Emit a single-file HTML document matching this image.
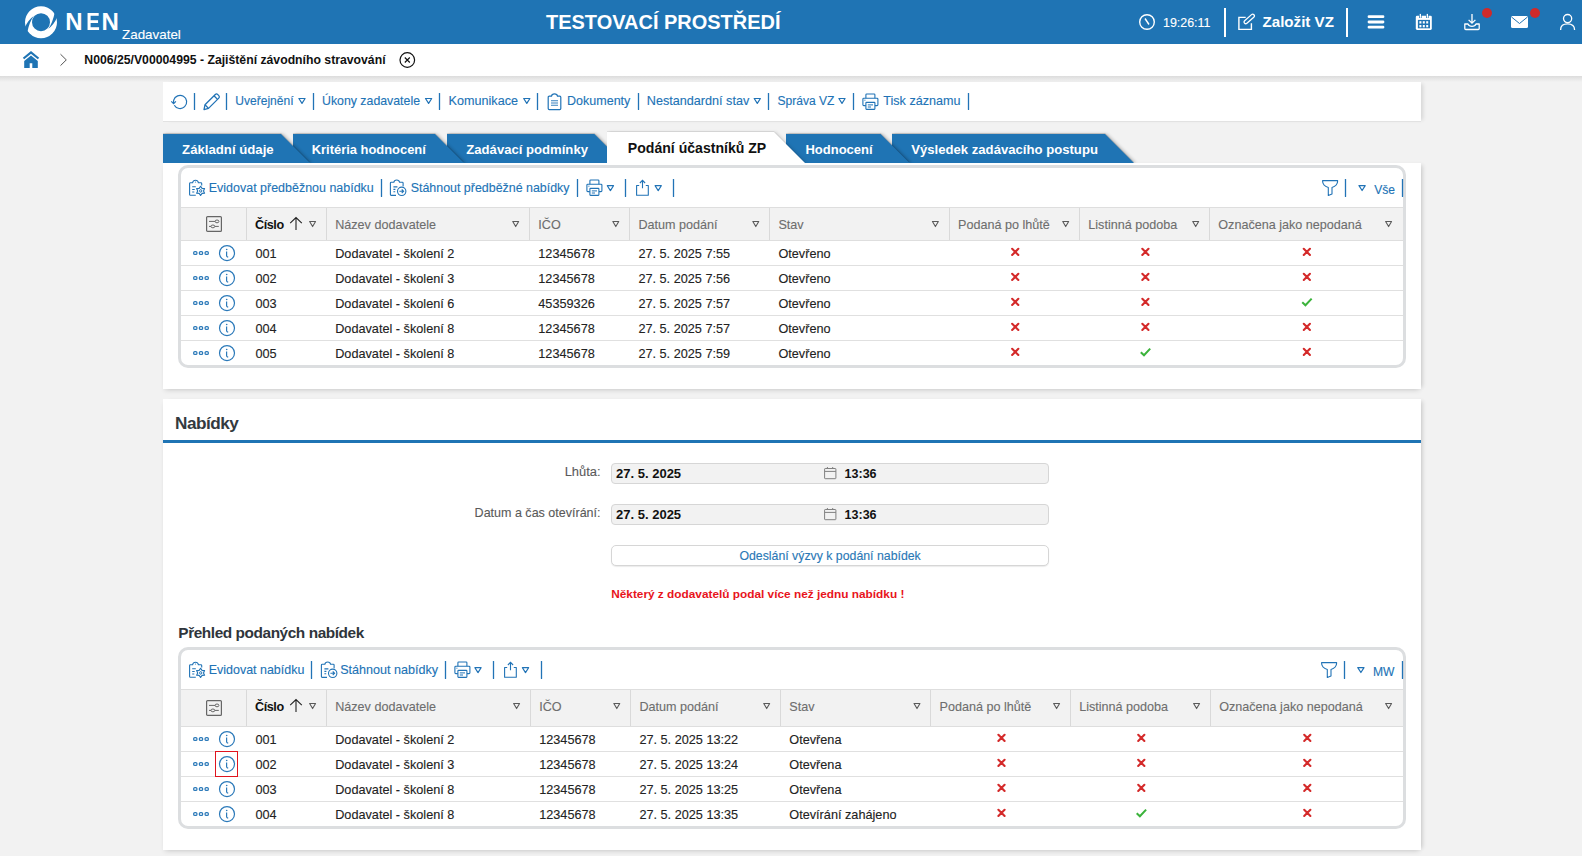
<!DOCTYPE html>
<html lang="cs"><head><meta charset="utf-8"><title>NEN</title>
<style>
html,body{margin:0;padding:0;}
body{width:1582px;height:856px;overflow:hidden;position:relative;background:#f2f2f2;font-family:"Liberation Sans",sans-serif;}
.t{position:absolute;white-space:nowrap;line-height:1;-webkit-text-stroke:0.12px currentColor;}
.b{position:absolute;display:block;}
</style></head><body>
<div class="b" style="left:0px;top:0px;width:1582px;height:44px;background:#1f74b4"></div>
<div class="b" style="left:0px;top:44px;width:1582px;height:32px;background:#fff"></div>
<div class="b" style="left:0px;top:76px;width:1582px;height:6px;background:linear-gradient(#dcdcdc,#f2f2f2)"></div>
<svg class="b" style="left:24px;top:5px;" width="34" height="34" viewBox="0 0 34 34"><circle cx="17" cy="17.2" r="12.5" fill="none" stroke="#fff" stroke-width="7"/>
<path d="M9.80 11.00 Q4.40 14.60 0.60 22.80 L3.20 27.60 Q5.40 16.60 9.80 11.00 Z" fill="#1f74b4"/><path d="M24.20 23.80 Q29.60 20.20 33.40 12.00 L30.80 7.20 Q28.60 18.20 24.20 23.80 Z" fill="#1f74b4"/></svg>
<div class="t" style="left:65.20px;top:9.60px;font-size:24.00px;font-weight:bold;-webkit-text-stroke:0;color:#fff;">N</div>
<div class="t" style="left:86.20px;top:9.60px;font-size:24.00px;font-weight:bold;-webkit-text-stroke:0;color:#fff;transform:scaleX(0.85);transform-origin:2px 0">E</div>
<div class="t" style="left:101.60px;top:9.60px;font-size:24.00px;font-weight:bold;-webkit-text-stroke:0;color:#fff;">N</div>
<div class="t" style="left:122.00px;top:28.41px;font-size:13.40px;color:#fff;">Zadavatel</div>
<div class="t" style="left:546.00px;top:11.72px;font-size:19.98px;font-weight:bold;-webkit-text-stroke:0;color:#fff;">TESTOVACÍ PROSTŘEDÍ</div>
<svg class="b" style="left:1138px;top:13px;" width="18" height="18" viewBox="0 0 18 18"><circle cx="9" cy="9" r="7.3" fill="none" stroke="#fff" stroke-width="1.4"/><path d="M7 5.5 L11 11.5" stroke="#fff" stroke-width="1.4" fill="none"/></svg>
<div class="t" style="left:1163.00px;top:17.23px;font-size:12.44px;color:#fff;">19:26:11</div>
<div class="b" style="left:1224px;top:8px;width:2px;height:29px;background:#fff"></div>
<svg class="b" style="left:1237px;top:13px;" width="20" height="18" viewBox="0 0 20 18"><path d="M8.7 4.4 H1.9 V16.4 H14.4 V10.2" fill="none" stroke="#fff" stroke-width="1.4"/><rect x="5.9" y="4.25" width="12.6" height="3.4" rx="1.7" transform="rotate(-41.7 12.2 5.95)" fill="none" stroke="#fff" stroke-width="1.3"/></svg>
<div class="t" style="left:1262.50px;top:14.13px;font-size:15.14px;font-weight:bold;-webkit-text-stroke:0;color:#fff;">Založit VZ</div>
<div class="b" style="left:1346px;top:8px;width:2px;height:29px;background:#fff"></div>
<svg class="b" style="left:1367px;top:14px;" width="18" height="16" viewBox="0 0 18 16"><path d="M2 2.7 H16 M2 8 H16 M2 13.2 H16" stroke="#fff" stroke-width="2.8" stroke-linecap="round"/></svg>
<svg class="b" style="left:1414px;top:13px;" width="20" height="18" viewBox="0 0 20 18"><rect x="1.8" y="2.8" width="16" height="14.1" rx="1.3" fill="#fff"/><rect x="3.9" y="6.9" width="12.1" height="8.4" fill="#1f74b4"/><rect x="5.40" y="8.20" width="2.0" height="2.3" fill="#fff"/><rect x="8.80" y="8.20" width="2.0" height="2.3" fill="#fff"/><rect x="12.20" y="8.20" width="2.0" height="2.3" fill="#fff"/><rect x="5.40" y="12.00" width="2.0" height="2.3" fill="#fff"/><rect x="8.80" y="12.00" width="2.0" height="2.3" fill="#fff"/><rect x="12.20" y="12.00" width="2.0" height="2.3" fill="#fff"/><rect x="5.0" y="0.4" width="2.6" height="4.6" fill="#1f74b4"/><rect x="12" y="0.4" width="2.6" height="4.6" fill="#1f74b4"/><rect x="5.7" y="0.9" width="1.3" height="3.9" fill="#fff"/><rect x="12.7" y="0.9" width="1.3" height="3.9" fill="#fff"/></svg>
<svg class="b" style="left:1463px;top:13px;" width="18" height="18" viewBox="0 0 18 18"><path d="M9 1 V10 M5.6 6.9 L9 10.2 L12.4 6.9" fill="none" stroke="#fff" stroke-width="1.3"/><path d="M1.8 11 V15.5 Q1.8 16.5 2.8 16.5 H15.2 Q16.2 16.5 16.2 15.5 V11 H13 Q12 13.3 9 13.3 Q6 13.3 5 11 Z" fill="none" stroke="#fff" stroke-width="1.3" stroke-linejoin="round"/></svg>
<svg class="b" style="left:1482px;top:8px;" width="10" height="10" viewBox="0 0 10 10"><circle cx="5" cy="5" r="5" fill="#cf2a2a"/></svg>
<svg class="b" style="left:1510px;top:15px;" width="19" height="14" viewBox="0 0 19 14"><rect x="1" y="1" width="17" height="12" rx="1.5" fill="#fff"/><path d="M1.5 2 L9.5 8.5 L17.5 2" fill="none" stroke="#1f74b4" stroke-width="1"/></svg>
<svg class="b" style="left:1530px;top:8px;" width="10" height="10" viewBox="0 0 10 10"><circle cx="5" cy="5" r="5" fill="#cf2a2a"/></svg>
<svg class="b" style="left:1559px;top:13px;" width="17" height="18" viewBox="0 0 17 18"><circle cx="8.6" cy="5.6" r="4.1" fill="none" stroke="#fff" stroke-width="1.3"/><path d="M1.6 17 Q1.6 10.8 8.6 10.8 Q15.6 10.8 15.6 17" fill="none" stroke="#fff" stroke-width="1.3"/></svg>
<svg class="b" style="left:22px;top:51px;" width="18" height="18" viewBox="0 0 18 18"><path d="M1.5 7.5 L9 1.5 L16.5 7.5" fill="none" stroke="#1f74b4" stroke-width="2.2"/><path d="M2.2 10 L9 4.6 L15.8 10 V17 H10.3 V12.3 H7.7 V17 H2.2 Z" fill="#1f74b4"/></svg>
<svg class="b" style="left:59px;top:53px;" width="10" height="14" viewBox="0 0 10 14"><path d="M1.5 1.2 L7.3 6.9 L1.5 12.6" fill="none" stroke="#555" stroke-width="1"/></svg>
<div class="t" style="left:84.30px;top:53.60px;font-size:12.24px;font-weight:bold;-webkit-text-stroke:0;color:#111;">N006/25/V00004995 - Zajištění závodního stravování</div>
<svg class="b" style="left:398px;top:51px;" width="18" height="18" viewBox="0 0 18 18"><circle cx="9.3" cy="9" r="7.3" fill="none" stroke="#111" stroke-width="1.2"/><path d="M6.8 6.5 L11.8 11.5 M11.8 6.5 L6.8 11.5" stroke="#111" stroke-width="1.15"/></svg>
<div class="b" style="left:163px;top:82px;width:1258px;height:40px;background:#fff;border-bottom:1px solid #e2e2e2;box-sizing:border-box;box-shadow:4px 0 4px -2px rgba(0,0,0,0.12)"></div>
<svg class="b" style="left:170px;top:93px;" width="19" height="18" viewBox="0 0 19 18"><path d="M4.3 12.2 A6.6 6.6 0 1 0 3.7 7.2 Q3.5 8.5 3.6 10.3" fill="none" stroke="#2173b6" stroke-width="1.2"/><path d="M1.3 8.3 L3.6 10.6 L5.9 8.3" fill="none" stroke="#2173b6" stroke-width="1.2"/></svg>
<svg class="b" style="left:192px;top:93px;" width="5" height="17" viewBox="0 0 5 17"><line x1="2.50" y1="0.6" x2="2.50" y2="16.40" stroke="#2173b6" stroke-width="1.3" stroke-linecap="round"/></svg>
<svg class="b" style="left:202px;top:92px;" width="19" height="20" viewBox="0 0 19 20"><path d="M2 17.6 L3 12.8 L13.3 2.5 Q14.5 1.3 15.8 2.6 L16.8 3.6 Q18 4.9 16.8 6.1 L6.5 16.4 Z" fill="none" stroke="#2173b6" stroke-width="1.3" stroke-linejoin="round"/><path d="M3 12.8 L6.5 16.4 M12 3.8 L15.5 7.4" stroke="#2173b6" stroke-width="1.3"/></svg>
<svg class="b" style="left:224px;top:93px;" width="5" height="17" viewBox="0 0 5 17"><line x1="2.50" y1="0.6" x2="2.50" y2="16.40" stroke="#2173b6" stroke-width="1.3" stroke-linecap="round"/></svg>
<div class="t" style="left:235.30px;top:94.65px;font-size:12.06px;color:#2173b6;">Uveřejnění</div>
<svg class="b" style="left:297px;top:97px;" width="10" height="9" viewBox="0 0 10 9"><path d="M1.90 1.50 H8.10 L5.00 6.40 Z" fill="none" stroke="#2173b6" stroke-width="1.2" stroke-linejoin="round"/></svg>
<svg class="b" style="left:311px;top:93px;" width="5" height="17" viewBox="0 0 5 17"><line x1="2.50" y1="0.6" x2="2.50" y2="16.40" stroke="#2173b6" stroke-width="1.3" stroke-linecap="round"/></svg>
<div class="t" style="left:322.00px;top:95.32px;font-size:12.33px;color:#2173b6;">Úkony zadavatele</div>
<svg class="b" style="left:424px;top:97px;" width="10" height="9" viewBox="0 0 10 9"><path d="M1.50 1.50 H7.70 L4.60 6.40 Z" fill="none" stroke="#2173b6" stroke-width="1.2" stroke-linejoin="round"/></svg>
<svg class="b" style="left:437px;top:93px;" width="5" height="17" viewBox="0 0 5 17"><line x1="2.50" y1="0.6" x2="2.50" y2="16.40" stroke="#2173b6" stroke-width="1.3" stroke-linecap="round"/></svg>
<div class="t" style="left:448.60px;top:95.08px;font-size:12.61px;color:#2173b6;">Komunikace</div>
<svg class="b" style="left:522px;top:97px;" width="10" height="9" viewBox="0 0 10 9"><path d="M1.70 1.50 H7.90 L4.80 6.40 Z" fill="none" stroke="#2173b6" stroke-width="1.2" stroke-linejoin="round"/></svg>
<svg class="b" style="left:535px;top:93px;" width="5" height="17" viewBox="0 0 5 17"><line x1="2.50" y1="0.6" x2="2.50" y2="16.40" stroke="#2173b6" stroke-width="1.3" stroke-linecap="round"/></svg>
<svg class="b" style="left:547px;top:93px;" width="15" height="18" viewBox="0 0 15 18"><path d="M4.5 3.2 H2.3 Q1.2 3.2 1.2 4.3 V15.6 Q1.2 16.6 2.3 16.6 H12.7 Q13.8 16.6 13.8 15.6 V4.3 Q13.8 3.2 12.7 3.2 H10.5 Q10.2 0.9 7.5 0.9 Q4.8 0.9 4.5 3.2 Z" fill="none" stroke="#2173b6" stroke-width="1.2"/><path d="M4 7.7 H11 M4 10 H11 M4 12.3 H11" stroke="#2173b6" stroke-width="1.1" opacity="0.9"/></svg>
<div class="t" style="left:567.10px;top:95.16px;font-size:12.51px;color:#2173b6;">Dokumenty</div>
<svg class="b" style="left:636px;top:93px;" width="5" height="17" viewBox="0 0 5 17"><line x1="2.50" y1="0.6" x2="2.50" y2="16.40" stroke="#2173b6" stroke-width="1.3" stroke-linecap="round"/></svg>
<div class="t" style="left:646.80px;top:95.07px;font-size:12.63px;color:#2173b6;">Nestandardní stav</div>
<svg class="b" style="left:753px;top:97px;" width="10" height="9" viewBox="0 0 10 9"><path d="M1.20 1.50 H7.40 L4.30 6.40 Z" fill="none" stroke="#2173b6" stroke-width="1.2" stroke-linejoin="round"/></svg>
<svg class="b" style="left:766px;top:93px;" width="5" height="17" viewBox="0 0 5 17"><line x1="2.50" y1="0.6" x2="2.50" y2="16.40" stroke="#2173b6" stroke-width="1.3" stroke-linecap="round"/></svg>
<div class="t" style="left:777.50px;top:94.64px;font-size:12.07px;color:#2173b6;">Správa VZ</div>
<svg class="b" style="left:837px;top:97px;" width="10" height="9" viewBox="0 0 10 9"><path d="M1.90 1.50 H8.10 L5.00 6.40 Z" fill="none" stroke="#2173b6" stroke-width="1.2" stroke-linejoin="round"/></svg>
<svg class="b" style="left:851px;top:93px;" width="5" height="17" viewBox="0 0 5 17"><line x1="2.50" y1="0.6" x2="2.50" y2="16.40" stroke="#2173b6" stroke-width="1.3" stroke-linecap="round"/></svg>
<svg class="b" style="left:862px;top:93px;" width="18" height="18" viewBox="0 0 18 18"><path d="M3.9 5.2 V1.8 Q3.9 1 4.7 1 H12.1 Q12.9 1 12.9 1.8 V5.2" fill="none" stroke="#2173b6" stroke-width="1.1"/><path d="M3.9 12.6 H1.8 Q0.9 12.6 0.9 11.7 V6.1 Q0.9 5.2 1.8 5.2 H15 Q15.9 5.2 15.9 6.1 V11.7 Q15.9 12.6 15 12.6 H12.9" fill="none" stroke="#2173b6" stroke-width="1.1"/><rect x="3.9" y="9.4" width="9" height="7" rx="0.6" fill="#fff" stroke="#2173b6" stroke-width="1.1"/><path d="M5.8 11.9 H11 M5.8 14 H9 M2.4 7.2 H3.4" stroke="#2173b6" stroke-width="1"/></svg>
<div class="t" style="left:883.30px;top:95.10px;font-size:12.59px;color:#2173b6;">Tisk záznamu</div>
<svg class="b" style="left:966px;top:93px;" width="5" height="17" viewBox="0 0 5 17"><line x1="2.50" y1="0.6" x2="2.50" y2="16.40" stroke="#2173b6" stroke-width="1.3" stroke-linecap="round"/></svg>
<div class="b" style="left:163px;top:163px;width:1258px;height:226px;background:#fff;box-shadow:4px 0 4px -2px rgba(0,0,0,0.12), 0 3px 5px -2px rgba(0,0,0,0.16)"></div>
<div class="b" style="left:0;top:0;width:1582px;height:163px;overflow:hidden;z-index:2">
<svg class="b" style="left:163px;top:134px;z-index:40;filter:drop-shadow(0 -1px 0.5px rgba(0,0,0,0.14)) drop-shadow(2px 0 1.6px rgba(0,0,0,0.22));" width="148" height="29" viewBox="0 0 148 29"><polygon points="0,0 118.0,0 147.0,29 0,29" fill="#1f74b4"/></svg>
<div class="t" style="left:182.10px;top:142.79px;font-size:13.19px;font-weight:bold;-webkit-text-stroke:0;color:#fff;z-index:40">Základní údaje</div>
<svg class="b" style="left:293px;top:134px;z-index:39;filter:drop-shadow(0 -1px 0.5px rgba(0,0,0,0.14)) drop-shadow(2px 0 1.6px rgba(0,0,0,0.22));" width="172" height="29" viewBox="0 0 172 29"><polygon points="0,0 142.0,0 171.0,29 0,29" fill="#1f74b4"/></svg>
<div class="t" style="left:311.70px;top:143.81px;font-size:12.93px;font-weight:bold;-webkit-text-stroke:0;color:#fff;z-index:39">Kritéria hodnocení</div>
<svg class="b" style="left:447px;top:134px;z-index:38;filter:drop-shadow(0 -1px 0.5px rgba(0,0,0,0.14)) drop-shadow(2px 0 1.6px rgba(0,0,0,0.22));" width="177" height="29" viewBox="0 0 177 29"><polygon points="0,0 147.4,0 176.4,29 0,29" fill="#1f74b4"/></svg>
<div class="t" style="left:466.30px;top:142.85px;font-size:13.11px;font-weight:bold;-webkit-text-stroke:0;color:#fff;z-index:38">Zadávací podmínky</div>
<svg class="b" style="left:607px;top:132px;z-index:50;filter:drop-shadow(0 -1px 0.5px rgba(0,0,0,0.08)) drop-shadow(2px 0 1.6px rgba(0,0,0,0.12));" width="199" height="31" viewBox="0 0 199 31"><polygon points="0,0 167.0,0 198.0,31 0,31" fill="#fff"/></svg>
<div class="t" style="left:627.80px;top:140.63px;font-size:14.08px;font-weight:bold;-webkit-text-stroke:0;color:#111;z-index:60">Podání účastníků ZP</div>
<svg class="b" style="left:786px;top:134px;z-index:36;filter:drop-shadow(0 -1px 0.5px rgba(0,0,0,0.14)) drop-shadow(2px 0 1.6px rgba(0,0,0,0.22));" width="124" height="29" viewBox="0 0 124 29"><polygon points="0,0 94.6,0 123.6,29 0,29" fill="#1f74b4"/></svg>
<div class="t" style="left:805.40px;top:142.92px;font-size:13.03px;font-weight:bold;-webkit-text-stroke:0;color:#fff;z-index:36">Hodnocení</div>
<svg class="b" style="left:892px;top:134px;z-index:35;filter:drop-shadow(0 -1px 0.5px rgba(0,0,0,0.14)) drop-shadow(2px 0 1.6px rgba(0,0,0,0.22));" width="243" height="29" viewBox="0 0 243 29"><polygon points="0,0 213.0,0 242.0,29 0,29" fill="#1f74b4"/></svg>
<div class="t" style="left:911.20px;top:142.84px;font-size:13.13px;font-weight:bold;-webkit-text-stroke:0;color:#fff;z-index:35">Výsledek zadávacího postupu</div>
</div>
<div class="b" style="left:178px;top:165px;width:1222px;height:197px;border:3px solid #dcdee0;border-radius:10px;background:#fff"></div>
<svg class="b" style="left:188px;top:179px;" width="18" height="18" viewBox="0 0 18 18"><path d="M7.8 16.3 H2.4 Q1.6 16.3 1.6 15.5 V4.5 Q1.6 3.7 2.4 3.7 H4.6 Q5 1.2 7.5 1.2 Q10 1.2 10.4 3.7 H12.9 Q13.7 3.7 13.7 4.5 V6.6" fill="none" stroke="#2173b6" stroke-width="1.1"/><path d="M4.2 7.8 H7.8 M4.2 10.5 H6.7 M4.2 13 H6.3" stroke="#2173b6" stroke-width="1.1"/><circle cx="7.5" cy="3" r="0.6" fill="#2173b6"/><polygon points="12.60,7.30 14.05,9.39 16.58,9.60 15.50,11.90 16.58,14.20 14.05,14.41 12.60,16.50 11.15,14.41 8.62,14.20 9.70,11.90 8.62,9.60 11.15,9.39" fill="#fff" stroke="#2173b6" stroke-width="1.1" stroke-linejoin="round"/><ellipse cx="12.7" cy="11.9" rx="1.1" ry="1.3" fill="none" stroke="#2173b6" stroke-width="1"/></svg>
<div class="t" style="left:208.80px;top:181.60px;font-size:12.47px;color:#2173b6;">Evidovat předběžnou nabídku</div>
<svg class="b" style="left:379px;top:179px;" width="5" height="18" viewBox="0 0 5 18"><line x1="2.50" y1="0.6" x2="2.50" y2="17.40" stroke="#2173b6" stroke-width="1.3" stroke-linecap="round"/></svg>
<svg class="b" style="left:389px;top:179px;" width="18" height="18" viewBox="0 0 18 18"><path d="M7 16.4 H2.2 Q1.4 16.4 1.4 15.6 V4.1 Q1.4 3.3 2.2 3.3 H4.8 Q5.2 1 7.7 1 Q10.2 1 10.6 3.3 H13.3 Q14.1 3.3 14.1 4.1 V7.2" fill="none" stroke="#2173b6" stroke-width="1.1"/><path d="M4.4 7.9 H8.4 M4.4 10.4 H6.4 M4.4 12.8 H6.2" stroke="#2173b6" stroke-width="1.1"/><circle cx="12.7" cy="12.3" r="4.2" fill="#fff" stroke="#2173b6" stroke-width="1.1"/><path d="M10.4 12.3 H14.6 M12.7 10.5 L14.6 12.3 L12.7 14.1" fill="none" stroke="#2173b6" stroke-width="1.1"/></svg>
<div class="t" style="left:410.70px;top:181.63px;font-size:12.43px;color:#2173b6;">Stáhnout předběžné nabídky</div>
<svg class="b" style="left:575px;top:179px;" width="5" height="18" viewBox="0 0 5 18"><line x1="2.50" y1="0.6" x2="2.50" y2="17.40" stroke="#2173b6" stroke-width="1.3" stroke-linecap="round"/></svg>
<svg class="b" style="left:586px;top:179px;" width="18" height="18" viewBox="0 0 18 18"><path d="M3.9 5.2 V1.8 Q3.9 1 4.7 1 H12.1 Q12.9 1 12.9 1.8 V5.2" fill="none" stroke="#2173b6" stroke-width="1.1"/><path d="M3.9 12.6 H1.8 Q0.9 12.6 0.9 11.7 V6.1 Q0.9 5.2 1.8 5.2 H15 Q15.9 5.2 15.9 6.1 V11.7 Q15.9 12.6 15 12.6 H12.9" fill="none" stroke="#2173b6" stroke-width="1.1"/><rect x="3.9" y="9.4" width="9" height="7" rx="0.6" fill="#fff" stroke="#2173b6" stroke-width="1.1"/><path d="M5.8 11.9 H11 M5.8 14 H9 M2.4 7.2 H3.4" stroke="#2173b6" stroke-width="1"/></svg>
<svg class="b" style="left:606px;top:184px;" width="10" height="9" viewBox="0 0 10 9"><path d="M1.30 1.70 H7.50 L4.40 6.60 Z" fill="none" stroke="#2173b6" stroke-width="1.2" stroke-linejoin="round"/></svg>
<svg class="b" style="left:623px;top:179px;" width="5" height="18" viewBox="0 0 5 18"><line x1="2.50" y1="0.6" x2="2.50" y2="17.40" stroke="#2173b6" stroke-width="1.3" stroke-linecap="round"/></svg>
<svg class="b" style="left:635px;top:179px;" width="15" height="18" viewBox="0 0 15 18"><path d="M4.2 6.5 H1.6 V16.3 H13.3 V6.5 H10.8" fill="none" stroke="#2173b6" stroke-width="1.1" stroke-linejoin="round"/><path d="M7.5 9.2 V1.4 M4.9 4 L7.5 1.3 L10.1 4" fill="none" stroke="#2173b6" stroke-width="1.1"/></svg>
<svg class="b" style="left:654px;top:184px;" width="10" height="9" viewBox="0 0 10 9"><path d="M1.10 1.70 H7.30 L4.20 6.60 Z" fill="none" stroke="#2173b6" stroke-width="1.2" stroke-linejoin="round"/></svg>
<svg class="b" style="left:671px;top:179px;" width="5" height="18" viewBox="0 0 5 18"><line x1="2.50" y1="0.6" x2="2.50" y2="17.40" stroke="#2173b6" stroke-width="1.3" stroke-linecap="round"/></svg>
<svg class="b" style="left:1321px;top:179px;" width="18" height="18" viewBox="0 0 18 18"><path d="M1.6 1.6 H16.6 V2.3 Q16.6 6.6 11 8.6 V14.9 L7.3 16.5 V8.6 Q1.6 6.6 1.6 2.3 Z" fill="none" stroke="#2173b6" stroke-width="1.1" stroke-linejoin="round"/></svg>
<svg class="b" style="left:1343px;top:179px;" width="5" height="18" viewBox="0 0 5 18"><line x1="2.50" y1="0.6" x2="2.50" y2="17.40" stroke="#2173b6" stroke-width="1.3" stroke-linecap="round"/></svg>
<svg class="b" style="left:1357px;top:184px;" width="10" height="9" viewBox="0 0 10 9"><path d="M2.00 1.60 H8.20 L5.10 6.50 Z" fill="none" stroke="#2173b6" stroke-width="1.2" stroke-linejoin="round"/></svg>
<div class="t" style="left:1374.20px;top:183.52px;font-size:12.10px;color:#2173b6;">Vše</div>
<svg class="b" style="left:1400px;top:179px;" width="5" height="18" viewBox="0 0 5 18"><line x1="2.50" y1="0.6" x2="2.50" y2="17.40" stroke="#2173b6" stroke-width="1.3" stroke-linecap="round"/></svg>
<div class="b" style="left:181px;top:207px;width:1222px;height:34px;background:#f2f2f2;border-top:1px solid #dedede;border-bottom:1px solid #dedede;box-sizing:border-box"></div>
<div class="b" style="left:246px;top:208px;width:1px;height:32px;background:#d9d9d9"></div>
<div class="b" style="left:326px;top:208px;width:1px;height:32px;background:#d9d9d9"></div>
<div class="b" style="left:529px;top:208px;width:1px;height:32px;background:#d9d9d9"></div>
<div class="b" style="left:629px;top:208px;width:1px;height:32px;background:#d9d9d9"></div>
<div class="b" style="left:769px;top:208px;width:1px;height:32px;background:#d9d9d9"></div>
<div class="b" style="left:949px;top:208px;width:1px;height:32px;background:#d9d9d9"></div>
<div class="b" style="left:1079px;top:208px;width:1px;height:32px;background:#d9d9d9"></div>
<div class="b" style="left:1209px;top:208px;width:1px;height:32px;background:#d9d9d9"></div>
<svg class="b" style="left:205px;top:215px;" width="18" height="18" viewBox="0 0 18 18"><rect x="1.6" y="1.6" width="14.8" height="14.8" rx="1" fill="none" stroke="#666" stroke-width="1.2"/><path d="M4 6.4 H10.2 M4 11.4 H6 M9.8 11.4 H13.8" stroke="#666" stroke-width="1"/><ellipse cx="12" cy="6.4" rx="1.9" ry="1.4" fill="none" stroke="#666" stroke-width="1"/><ellipse cx="7.9" cy="11.4" rx="1.9" ry="1.4" fill="none" stroke="#666" stroke-width="1"/></svg>
<div class="t" style="left:255.10px;top:219.09px;font-size:12.60px;font-weight:bold;-webkit-text-stroke:0;color:#111;letter-spacing:-0.45px">Číslo</div>
<svg class="b" style="left:288px;top:216px;" width="16" height="15" viewBox="0 0 16 15"><path d="M2.2 7.2 L8 1.6 L13.8 7.2 M8 1.9 V14" fill="none" stroke="#222" stroke-width="1.1"/></svg>
<svg class="b" style="left:308px;top:220px;" width="10" height="9" viewBox="0 0 10 9"><path d="M1.65 1.55 H7.55 L4.60 6.55 Z" fill="none" stroke="#5a5a5a" stroke-width="1.1" stroke-linejoin="round"/></svg>
<div class="t" style="left:335.20px;top:219.29px;font-size:12.60px;color:#6e6e6e;">Název dodavatele</div>
<svg class="b" style="left:511px;top:220px;" width="10" height="9" viewBox="0 0 10 9"><path d="M1.75 1.55 H7.65 L4.70 6.55 Z" fill="none" stroke="#5a5a5a" stroke-width="1.1" stroke-linejoin="round"/></svg>
<div class="t" style="left:538.30px;top:219.29px;font-size:12.60px;color:#6e6e6e;">IČO</div>
<svg class="b" style="left:611px;top:220px;" width="10" height="9" viewBox="0 0 10 9"><path d="M1.85 1.55 H7.75 L4.80 6.55 Z" fill="none" stroke="#5a5a5a" stroke-width="1.1" stroke-linejoin="round"/></svg>
<div class="t" style="left:638.40px;top:219.29px;font-size:12.60px;color:#6e6e6e;">Datum podání</div>
<svg class="b" style="left:751px;top:220px;" width="10" height="9" viewBox="0 0 10 9"><path d="M1.85 1.55 H7.75 L4.80 6.55 Z" fill="none" stroke="#5a5a5a" stroke-width="1.1" stroke-linejoin="round"/></svg>
<div class="t" style="left:778.40px;top:219.29px;font-size:12.60px;color:#6e6e6e;">Stav</div>
<svg class="b" style="left:931px;top:220px;" width="10" height="9" viewBox="0 0 10 9"><path d="M1.45 1.55 H7.35 L4.40 6.55 Z" fill="none" stroke="#5a5a5a" stroke-width="1.1" stroke-linejoin="round"/></svg>
<div class="t" style="left:958.00px;top:219.29px;font-size:12.60px;color:#6e6e6e;">Podaná po lhůtě</div>
<svg class="b" style="left:1061px;top:220px;" width="10" height="9" viewBox="0 0 10 9"><path d="M1.75 1.55 H7.65 L4.70 6.55 Z" fill="none" stroke="#5a5a5a" stroke-width="1.1" stroke-linejoin="round"/></svg>
<div class="t" style="left:1088.30px;top:219.29px;font-size:12.60px;color:#6e6e6e;">Listinná podoba</div>
<svg class="b" style="left:1191px;top:220px;" width="10" height="9" viewBox="0 0 10 9"><path d="M1.75 1.55 H7.65 L4.70 6.55 Z" fill="none" stroke="#5a5a5a" stroke-width="1.1" stroke-linejoin="round"/></svg>
<div class="t" style="left:1218.30px;top:219.29px;font-size:12.60px;color:#6e6e6e;">Označena jako nepodaná</div>
<svg class="b" style="left:1384px;top:220px;" width="10" height="9" viewBox="0 0 10 9"><path d="M1.65 1.55 H7.55 L4.60 6.55 Z" fill="none" stroke="#5a5a5a" stroke-width="1.1" stroke-linejoin="round"/></svg>
<svg class="b" style="left:192px;top:249px;" width="18" height="8" viewBox="0 0 18 8"><rect x="1.65" y="2.55" width="3.3" height="2.9" rx="1.25" fill="none" stroke="#2b79b9" stroke-width="1.25"/><rect x="7.35" y="2.55" width="3.3" height="2.9" rx="1.25" fill="none" stroke="#2b79b9" stroke-width="1.25"/><rect x="13.05" y="2.55" width="3.3" height="2.9" rx="1.25" fill="none" stroke="#2b79b9" stroke-width="1.25"/></svg>
<svg class="b" style="left:218px;top:244px;" width="18" height="18" viewBox="0 0 18 18"><circle cx="9.00" cy="9.10" r="7.5" fill="none" stroke="#2b79b9" stroke-width="1.2"/><circle cx="8.70" cy="5.50" r="0.8" fill="#2b79b9"/><path d="M8.60 7.50 V11.70 Q8.60 12.70 10.20 13.30" fill="none" stroke="#2b79b9" stroke-width="1.2"/></svg>
<div class="t" style="left:255.40px;top:247.60px;font-size:12.70px;color:#222;">001</div>
<div class="t" style="left:335.20px;top:247.60px;font-size:12.70px;color:#222;">Dodavatel - školení 2</div>
<div class="t" style="left:538.30px;top:247.60px;font-size:12.70px;color:#222;">12345678</div>
<div class="t" style="left:638.40px;top:247.60px;font-size:12.70px;color:#222;">27. 5. 2025 7:55</div>
<div class="t" style="left:778.40px;top:247.60px;font-size:12.70px;color:#222;">Otevřeno</div>
<svg class="b" style="left:1010px;top:247px;" width="10" height="10" viewBox="0 0 10 10"><path d="M2.15 1.80 L8.35 8.00 M8.35 1.80 L2.15 8.00" stroke="#d42a2a" stroke-width="2.1" stroke-linecap="round"/></svg>
<svg class="b" style="left:1140px;top:247px;" width="10" height="10" viewBox="0 0 10 10"><path d="M2.30 1.80 L8.50 8.00 M8.50 1.80 L2.30 8.00" stroke="#d42a2a" stroke-width="2.1" stroke-linecap="round"/></svg>
<svg class="b" style="left:1302px;top:247px;" width="10" height="10" viewBox="0 0 10 10"><path d="M1.75 1.80 L7.95 8.00 M7.95 1.80 L1.75 8.00" stroke="#d42a2a" stroke-width="2.1" stroke-linecap="round"/></svg>
<div class="b" style="left:181px;top:265px;width:1222px;height:1px;background:#e0e0e0"></div>
<svg class="b" style="left:192px;top:274px;" width="18" height="8" viewBox="0 0 18 8"><rect x="1.65" y="2.55" width="3.3" height="2.9" rx="1.25" fill="none" stroke="#2b79b9" stroke-width="1.25"/><rect x="7.35" y="2.55" width="3.3" height="2.9" rx="1.25" fill="none" stroke="#2b79b9" stroke-width="1.25"/><rect x="13.05" y="2.55" width="3.3" height="2.9" rx="1.25" fill="none" stroke="#2b79b9" stroke-width="1.25"/></svg>
<svg class="b" style="left:218px;top:269px;" width="18" height="18" viewBox="0 0 18 18"><circle cx="9.00" cy="9.10" r="7.5" fill="none" stroke="#2b79b9" stroke-width="1.2"/><circle cx="8.70" cy="5.50" r="0.8" fill="#2b79b9"/><path d="M8.60 7.50 V11.70 Q8.60 12.70 10.20 13.30" fill="none" stroke="#2b79b9" stroke-width="1.2"/></svg>
<div class="t" style="left:255.40px;top:272.60px;font-size:12.70px;color:#222;">002</div>
<div class="t" style="left:335.20px;top:272.60px;font-size:12.70px;color:#222;">Dodavatel - školení 3</div>
<div class="t" style="left:538.30px;top:272.60px;font-size:12.70px;color:#222;">12345678</div>
<div class="t" style="left:638.40px;top:272.60px;font-size:12.70px;color:#222;">27. 5. 2025 7:56</div>
<div class="t" style="left:778.40px;top:272.60px;font-size:12.70px;color:#222;">Otevřeno</div>
<svg class="b" style="left:1010px;top:272px;" width="10" height="10" viewBox="0 0 10 10"><path d="M2.15 1.80 L8.35 8.00 M8.35 1.80 L2.15 8.00" stroke="#d42a2a" stroke-width="2.1" stroke-linecap="round"/></svg>
<svg class="b" style="left:1140px;top:272px;" width="10" height="10" viewBox="0 0 10 10"><path d="M2.30 1.80 L8.50 8.00 M8.50 1.80 L2.30 8.00" stroke="#d42a2a" stroke-width="2.1" stroke-linecap="round"/></svg>
<svg class="b" style="left:1302px;top:272px;" width="10" height="10" viewBox="0 0 10 10"><path d="M1.75 1.80 L7.95 8.00 M7.95 1.80 L1.75 8.00" stroke="#d42a2a" stroke-width="2.1" stroke-linecap="round"/></svg>
<div class="b" style="left:181px;top:290px;width:1222px;height:1px;background:#e0e0e0"></div>
<svg class="b" style="left:192px;top:299px;" width="18" height="8" viewBox="0 0 18 8"><rect x="1.65" y="2.55" width="3.3" height="2.9" rx="1.25" fill="none" stroke="#2b79b9" stroke-width="1.25"/><rect x="7.35" y="2.55" width="3.3" height="2.9" rx="1.25" fill="none" stroke="#2b79b9" stroke-width="1.25"/><rect x="13.05" y="2.55" width="3.3" height="2.9" rx="1.25" fill="none" stroke="#2b79b9" stroke-width="1.25"/></svg>
<svg class="b" style="left:218px;top:294px;" width="18" height="18" viewBox="0 0 18 18"><circle cx="9.00" cy="9.10" r="7.5" fill="none" stroke="#2b79b9" stroke-width="1.2"/><circle cx="8.70" cy="5.50" r="0.8" fill="#2b79b9"/><path d="M8.60 7.50 V11.70 Q8.60 12.70 10.20 13.30" fill="none" stroke="#2b79b9" stroke-width="1.2"/></svg>
<div class="t" style="left:255.40px;top:297.60px;font-size:12.70px;color:#222;">003</div>
<div class="t" style="left:335.20px;top:297.60px;font-size:12.70px;color:#222;">Dodavatel - školení 6</div>
<div class="t" style="left:538.30px;top:297.60px;font-size:12.70px;color:#222;">45359326</div>
<div class="t" style="left:638.40px;top:297.60px;font-size:12.70px;color:#222;">27. 5. 2025 7:57</div>
<div class="t" style="left:778.40px;top:297.60px;font-size:12.70px;color:#222;">Otevřeno</div>
<svg class="b" style="left:1010px;top:297px;" width="10" height="10" viewBox="0 0 10 10"><path d="M2.15 1.80 L8.35 8.00 M8.35 1.80 L2.15 8.00" stroke="#d42a2a" stroke-width="2.1" stroke-linecap="round"/></svg>
<svg class="b" style="left:1140px;top:297px;" width="10" height="10" viewBox="0 0 10 10"><path d="M2.30 1.80 L8.50 8.00 M8.50 1.80 L2.30 8.00" stroke="#d42a2a" stroke-width="2.1" stroke-linecap="round"/></svg>
<svg class="b" style="left:1301px;top:297px;" width="12" height="10" viewBox="0 0 12 10"><path d="M1.25 5.20 L4.45 8.30 L10.65 1.60" fill="none" stroke="#3bb33b" stroke-width="2"/></svg>
<div class="b" style="left:181px;top:315px;width:1222px;height:1px;background:#e0e0e0"></div>
<svg class="b" style="left:192px;top:324px;" width="18" height="8" viewBox="0 0 18 8"><rect x="1.65" y="2.55" width="3.3" height="2.9" rx="1.25" fill="none" stroke="#2b79b9" stroke-width="1.25"/><rect x="7.35" y="2.55" width="3.3" height="2.9" rx="1.25" fill="none" stroke="#2b79b9" stroke-width="1.25"/><rect x="13.05" y="2.55" width="3.3" height="2.9" rx="1.25" fill="none" stroke="#2b79b9" stroke-width="1.25"/></svg>
<svg class="b" style="left:218px;top:319px;" width="18" height="18" viewBox="0 0 18 18"><circle cx="9.00" cy="9.10" r="7.5" fill="none" stroke="#2b79b9" stroke-width="1.2"/><circle cx="8.70" cy="5.50" r="0.8" fill="#2b79b9"/><path d="M8.60 7.50 V11.70 Q8.60 12.70 10.20 13.30" fill="none" stroke="#2b79b9" stroke-width="1.2"/></svg>
<div class="t" style="left:255.40px;top:322.60px;font-size:12.70px;color:#222;">004</div>
<div class="t" style="left:335.20px;top:322.60px;font-size:12.70px;color:#222;">Dodavatel - školení 8</div>
<div class="t" style="left:538.30px;top:322.60px;font-size:12.70px;color:#222;">12345678</div>
<div class="t" style="left:638.40px;top:322.60px;font-size:12.70px;color:#222;">27. 5. 2025 7:57</div>
<div class="t" style="left:778.40px;top:322.60px;font-size:12.70px;color:#222;">Otevřeno</div>
<svg class="b" style="left:1010px;top:322px;" width="10" height="10" viewBox="0 0 10 10"><path d="M2.15 1.80 L8.35 8.00 M8.35 1.80 L2.15 8.00" stroke="#d42a2a" stroke-width="2.1" stroke-linecap="round"/></svg>
<svg class="b" style="left:1140px;top:322px;" width="10" height="10" viewBox="0 0 10 10"><path d="M2.30 1.80 L8.50 8.00 M8.50 1.80 L2.30 8.00" stroke="#d42a2a" stroke-width="2.1" stroke-linecap="round"/></svg>
<svg class="b" style="left:1302px;top:322px;" width="10" height="10" viewBox="0 0 10 10"><path d="M1.75 1.80 L7.95 8.00 M7.95 1.80 L1.75 8.00" stroke="#d42a2a" stroke-width="2.1" stroke-linecap="round"/></svg>
<div class="b" style="left:181px;top:340px;width:1222px;height:1px;background:#e0e0e0"></div>
<svg class="b" style="left:192px;top:349px;" width="18" height="8" viewBox="0 0 18 8"><rect x="1.65" y="2.55" width="3.3" height="2.9" rx="1.25" fill="none" stroke="#2b79b9" stroke-width="1.25"/><rect x="7.35" y="2.55" width="3.3" height="2.9" rx="1.25" fill="none" stroke="#2b79b9" stroke-width="1.25"/><rect x="13.05" y="2.55" width="3.3" height="2.9" rx="1.25" fill="none" stroke="#2b79b9" stroke-width="1.25"/></svg>
<svg class="b" style="left:218px;top:344px;" width="18" height="18" viewBox="0 0 18 18"><circle cx="9.00" cy="9.10" r="7.5" fill="none" stroke="#2b79b9" stroke-width="1.2"/><circle cx="8.70" cy="5.50" r="0.8" fill="#2b79b9"/><path d="M8.60 7.50 V11.70 Q8.60 12.70 10.20 13.30" fill="none" stroke="#2b79b9" stroke-width="1.2"/></svg>
<div class="t" style="left:255.40px;top:347.60px;font-size:12.70px;color:#222;">005</div>
<div class="t" style="left:335.20px;top:347.60px;font-size:12.70px;color:#222;">Dodavatel - školení 8</div>
<div class="t" style="left:538.30px;top:347.60px;font-size:12.70px;color:#222;">12345678</div>
<div class="t" style="left:638.40px;top:347.60px;font-size:12.70px;color:#222;">27. 5. 2025 7:59</div>
<div class="t" style="left:778.40px;top:347.60px;font-size:12.70px;color:#222;">Otevřeno</div>
<svg class="b" style="left:1010px;top:347px;" width="10" height="10" viewBox="0 0 10 10"><path d="M2.15 1.80 L8.35 8.00 M8.35 1.80 L2.15 8.00" stroke="#d42a2a" stroke-width="2.1" stroke-linecap="round"/></svg>
<svg class="b" style="left:1139px;top:347px;" width="12" height="10" viewBox="0 0 12 10"><path d="M1.80 5.20 L5.00 8.30 L11.20 1.60" fill="none" stroke="#3bb33b" stroke-width="2"/></svg>
<svg class="b" style="left:1302px;top:347px;" width="10" height="10" viewBox="0 0 10 10"><path d="M1.75 1.80 L7.95 8.00 M7.95 1.80 L1.75 8.00" stroke="#d42a2a" stroke-width="2.1" stroke-linecap="round"/></svg>
<div class="b" style="left:163px;top:399px;width:1258px;height:451px;background:#fff;box-shadow:4px 0 4px -2px rgba(0,0,0,0.12), 0 3px 5px -2px rgba(0,0,0,0.16)"></div>
<div class="t" style="left:175.00px;top:415.28px;font-size:17.20px;font-weight:bold;-webkit-text-stroke:0;color:#333a40;letter-spacing:-0.5px">Nabídky</div>
<div class="b" style="left:163px;top:440px;width:1258px;height:3px;background:#1f74b4"></div>
<div class="t" style="left:564.70px;top:465.82px;font-size:12.91px;color:#5a5a5a;">Lhůta:</div>
<div class="t" style="left:474.60px;top:507.25px;font-size:12.52px;color:#5a5a5a;">Datum a čas otevírání:</div>
<div class="b" style="left:611px;top:463px;width:438px;height:21px;background:#f2f2f2;border:1px solid #d6d6d6;border-radius:4px;box-sizing:border-box"></div>
<div class="t" style="left:616.10px;top:466.76px;font-size:12.99px;font-weight:bold;-webkit-text-stroke:0;color:#111;">27. 5. 2025</div>
<svg class="b" style="left:823px;top:467px;" width="14" height="13" viewBox="0 0 14 13"><rect x="1.6" y="1.5" width="11.3" height="10.2" rx="0.6" fill="none" stroke="#808080" stroke-width="1"/><path d="M1.6 4.4 H12.9 M4.4 0 V2 M9.7 0 V2" stroke="#808080" stroke-width="1"/></svg>
<div class="t" style="left:844.60px;top:467.97px;font-size:12.51px;font-weight:bold;-webkit-text-stroke:0;color:#111;">13:36</div>
<div class="b" style="left:611px;top:504px;width:438px;height:21px;background:#f2f2f2;border:1px solid #d6d6d6;border-radius:4px;box-sizing:border-box"></div>
<div class="t" style="left:616.10px;top:507.76px;font-size:12.99px;font-weight:bold;-webkit-text-stroke:0;color:#111;">27. 5. 2025</div>
<svg class="b" style="left:823px;top:508px;" width="14" height="13" viewBox="0 0 14 13"><rect x="1.6" y="1.5" width="11.3" height="10.2" rx="0.6" fill="none" stroke="#808080" stroke-width="1"/><path d="M1.6 4.4 H12.9 M4.4 0 V2 M9.7 0 V2" stroke="#808080" stroke-width="1"/></svg>
<div class="t" style="left:844.60px;top:508.97px;font-size:12.51px;font-weight:bold;-webkit-text-stroke:0;color:#111;">13:36</div>
<div class="b" style="left:611px;top:545px;width:438px;height:21px;background:#fff;border:1px solid #d6d6d6;border-radius:5px;box-sizing:border-box;box-shadow:0 1px 1px rgba(0,0,0,0.08)"></div>
<div class="t" style="left:739.40px;top:550.13px;font-size:12.32px;color:#2a78b6;">Odeslání výzvy k podání nabídek</div>
<div class="t" style="left:611.20px;top:589.34px;font-size:11.83px;font-weight:bold;-webkit-text-stroke:0;color:#e8141c;">Některý z dodavatelů podal více než jednu nabídku !</div>
<div class="t" style="left:178.30px;top:624.71px;font-size:15.40px;font-weight:bold;-webkit-text-stroke:0;color:#2f353b;letter-spacing:-0.43px">Přehled podaných nabídek</div>
<div class="b" style="left:178px;top:647px;width:1222px;height:176px;border:3px solid #dcdee0;border-radius:10px;background:#fff"></div>
<svg class="b" style="left:188px;top:661px;" width="18" height="18" viewBox="0 0 18 18"><path d="M7.8 16.3 H2.4 Q1.6 16.3 1.6 15.5 V4.5 Q1.6 3.7 2.4 3.7 H4.6 Q5 1.2 7.5 1.2 Q10 1.2 10.4 3.7 H12.9 Q13.7 3.7 13.7 4.5 V6.6" fill="none" stroke="#2173b6" stroke-width="1.1"/><path d="M4.2 7.8 H7.8 M4.2 10.5 H6.7 M4.2 13 H6.3" stroke="#2173b6" stroke-width="1.1"/><circle cx="7.5" cy="3" r="0.6" fill="#2173b6"/><polygon points="12.60,7.30 14.05,9.39 16.58,9.60 15.50,11.90 16.58,14.20 14.05,14.41 12.60,16.50 11.15,14.41 8.62,14.20 9.70,11.90 8.62,9.60 11.15,9.39" fill="#fff" stroke="#2173b6" stroke-width="1.1" stroke-linejoin="round"/><ellipse cx="12.7" cy="11.9" rx="1.1" ry="1.3" fill="none" stroke="#2173b6" stroke-width="1"/></svg>
<div class="t" style="left:208.80px;top:663.61px;font-size:12.46px;color:#2173b6;">Evidovat nabídku</div>
<svg class="b" style="left:309px;top:661px;" width="5" height="18" viewBox="0 0 5 18"><line x1="2.50" y1="0.6" x2="2.50" y2="17.40" stroke="#2173b6" stroke-width="1.3" stroke-linecap="round"/></svg>
<svg class="b" style="left:320px;top:661px;" width="18" height="18" viewBox="0 0 18 18"><path d="M7 16.4 H2.2 Q1.4 16.4 1.4 15.6 V4.1 Q1.4 3.3 2.2 3.3 H4.8 Q5.2 1 7.7 1 Q10.2 1 10.6 3.3 H13.3 Q14.1 3.3 14.1 4.1 V7.2" fill="none" stroke="#2173b6" stroke-width="1.1"/><path d="M4.4 7.9 H8.4 M4.4 10.4 H6.4 M4.4 12.8 H6.2" stroke="#2173b6" stroke-width="1.1"/><circle cx="12.7" cy="12.3" r="4.2" fill="#fff" stroke="#2173b6" stroke-width="1.1"/><path d="M10.4 12.3 H14.6 M12.7 10.5 L14.6 12.3 L12.7 14.1" fill="none" stroke="#2173b6" stroke-width="1.1"/></svg>
<div class="t" style="left:340.20px;top:663.50px;font-size:12.59px;color:#2173b6;">Stáhnout nabídky</div>
<svg class="b" style="left:443px;top:661px;" width="5" height="18" viewBox="0 0 5 18"><line x1="2.50" y1="0.6" x2="2.50" y2="17.40" stroke="#2173b6" stroke-width="1.3" stroke-linecap="round"/></svg>
<svg class="b" style="left:454px;top:661px;" width="18" height="18" viewBox="0 0 18 18"><path d="M3.9 5.2 V1.8 Q3.9 1 4.7 1 H12.1 Q12.9 1 12.9 1.8 V5.2" fill="none" stroke="#2173b6" stroke-width="1.1"/><path d="M3.9 12.6 H1.8 Q0.9 12.6 0.9 11.7 V6.1 Q0.9 5.2 1.8 5.2 H15 Q15.9 5.2 15.9 6.1 V11.7 Q15.9 12.6 15 12.6 H12.9" fill="none" stroke="#2173b6" stroke-width="1.1"/><rect x="3.9" y="9.4" width="9" height="7" rx="0.6" fill="#fff" stroke="#2173b6" stroke-width="1.1"/><path d="M5.8 11.9 H11 M5.8 14 H9 M2.4 7.2 H3.4" stroke="#2173b6" stroke-width="1"/></svg>
<svg class="b" style="left:473px;top:666px;" width="10" height="9" viewBox="0 0 10 9"><path d="M1.90 1.70 H8.10 L5.00 6.60 Z" fill="none" stroke="#2173b6" stroke-width="1.2" stroke-linejoin="round"/></svg>
<svg class="b" style="left:491px;top:661px;" width="5" height="18" viewBox="0 0 5 18"><line x1="2.50" y1="0.6" x2="2.50" y2="17.40" stroke="#2173b6" stroke-width="1.3" stroke-linecap="round"/></svg>
<svg class="b" style="left:503px;top:661px;" width="15" height="18" viewBox="0 0 15 18"><path d="M4.2 6.5 H1.6 V16.3 H13.3 V6.5 H10.8" fill="none" stroke="#2173b6" stroke-width="1.1" stroke-linejoin="round"/><path d="M7.5 9.2 V1.4 M4.9 4 L7.5 1.3 L10.1 4" fill="none" stroke="#2173b6" stroke-width="1.1"/></svg>
<svg class="b" style="left:521px;top:666px;" width="10" height="9" viewBox="0 0 10 9"><path d="M1.40 1.70 H7.60 L4.50 6.60 Z" fill="none" stroke="#2173b6" stroke-width="1.2" stroke-linejoin="round"/></svg>
<svg class="b" style="left:539px;top:661px;" width="5" height="18" viewBox="0 0 5 18"><line x1="2.50" y1="0.6" x2="2.50" y2="17.40" stroke="#2173b6" stroke-width="1.3" stroke-linecap="round"/></svg>
<svg class="b" style="left:1319.8px;top:661px;" width="18" height="18" viewBox="0 0 18 18"><path d="M1.6 1.6 H16.6 V2.3 Q16.6 6.6 11 8.6 V14.9 L7.3 16.5 V8.6 Q1.6 6.6 1.6 2.3 Z" fill="none" stroke="#2173b6" stroke-width="1.1" stroke-linejoin="round"/></svg>
<svg class="b" style="left:1342px;top:661px;" width="5" height="18" viewBox="0 0 5 18"><line x1="2.50" y1="0.6" x2="2.50" y2="17.40" stroke="#2173b6" stroke-width="1.3" stroke-linecap="round"/></svg>
<svg class="b" style="left:1356px;top:666px;" width="10" height="9" viewBox="0 0 10 9"><path d="M1.80 1.60 H8.00 L4.90 6.50 Z" fill="none" stroke="#2173b6" stroke-width="1.2" stroke-linejoin="round"/></svg>
<div class="t" style="left:1373.00px;top:665.51px;font-size:12.10px;color:#2173b6;">MW</div>
<svg class="b" style="left:1400px;top:661px;" width="5" height="18" viewBox="0 0 5 18"><line x1="2.50" y1="0.6" x2="2.50" y2="17.40" stroke="#2173b6" stroke-width="1.3" stroke-linecap="round"/></svg>
<div class="b" style="left:181px;top:689px;width:1222px;height:38px;background:#f2f2f2;border-top:1px solid #dedede;border-bottom:1px solid #dedede;box-sizing:border-box"></div>
<div class="b" style="left:246px;top:690px;width:1px;height:36px;background:#d9d9d9"></div>
<div class="b" style="left:326px;top:690px;width:1px;height:36px;background:#d9d9d9"></div>
<div class="b" style="left:530px;top:690px;width:1px;height:36px;background:#d9d9d9"></div>
<div class="b" style="left:630px;top:690px;width:1px;height:36px;background:#d9d9d9"></div>
<div class="b" style="left:780px;top:690px;width:1px;height:36px;background:#d9d9d9"></div>
<div class="b" style="left:930px;top:690px;width:1px;height:36px;background:#d9d9d9"></div>
<div class="b" style="left:1070px;top:690px;width:1px;height:36px;background:#d9d9d9"></div>
<div class="b" style="left:1210px;top:690px;width:1px;height:36px;background:#d9d9d9"></div>
<svg class="b" style="left:205px;top:699px;" width="18" height="18" viewBox="0 0 18 18"><rect x="1.6" y="1.6" width="14.8" height="14.8" rx="1" fill="none" stroke="#666" stroke-width="1.2"/><path d="M4 6.4 H10.2 M4 11.4 H6 M9.8 11.4 H13.8" stroke="#666" stroke-width="1"/><ellipse cx="12" cy="6.4" rx="1.9" ry="1.4" fill="none" stroke="#666" stroke-width="1"/><ellipse cx="7.9" cy="11.4" rx="1.9" ry="1.4" fill="none" stroke="#666" stroke-width="1"/></svg>
<div class="t" style="left:255.10px;top:701.09px;font-size:12.60px;font-weight:bold;-webkit-text-stroke:0;color:#111;letter-spacing:-0.45px">Číslo</div>
<svg class="b" style="left:288px;top:698px;" width="16" height="15" viewBox="0 0 16 15"><path d="M2.2 7.2 L8 1.6 L13.8 7.2 M8 1.9 V14" fill="none" stroke="#222" stroke-width="1.1"/></svg>
<svg class="b" style="left:308px;top:702px;" width="10" height="9" viewBox="0 0 10 9"><path d="M1.65 1.55 H7.55 L4.60 6.55 Z" fill="none" stroke="#5a5a5a" stroke-width="1.1" stroke-linejoin="round"/></svg>
<div class="t" style="left:335.20px;top:701.29px;font-size:12.60px;color:#6e6e6e;">Název dodavatele</div>
<svg class="b" style="left:512px;top:702px;" width="10" height="9" viewBox="0 0 10 9"><path d="M1.65 1.55 H7.55 L4.60 6.55 Z" fill="none" stroke="#5a5a5a" stroke-width="1.1" stroke-linejoin="round"/></svg>
<div class="t" style="left:539.20px;top:701.29px;font-size:12.60px;color:#6e6e6e;">IČO</div>
<svg class="b" style="left:612px;top:702px;" width="10" height="9" viewBox="0 0 10 9"><path d="M1.85 1.55 H7.75 L4.80 6.55 Z" fill="none" stroke="#5a5a5a" stroke-width="1.1" stroke-linejoin="round"/></svg>
<div class="t" style="left:639.40px;top:701.29px;font-size:12.60px;color:#6e6e6e;">Datum podání</div>
<svg class="b" style="left:762px;top:702px;" width="10" height="9" viewBox="0 0 10 9"><path d="M1.75 1.55 H7.65 L4.70 6.55 Z" fill="none" stroke="#5a5a5a" stroke-width="1.1" stroke-linejoin="round"/></svg>
<div class="t" style="left:789.30px;top:701.29px;font-size:12.60px;color:#6e6e6e;">Stav</div>
<svg class="b" style="left:912px;top:702px;" width="10" height="9" viewBox="0 0 10 9"><path d="M2.05 1.55 H7.95 L5.00 6.55 Z" fill="none" stroke="#5a5a5a" stroke-width="1.1" stroke-linejoin="round"/></svg>
<div class="t" style="left:939.60px;top:701.29px;font-size:12.60px;color:#6e6e6e;">Podaná po lhůtě</div>
<svg class="b" style="left:1052px;top:702px;" width="10" height="9" viewBox="0 0 10 9"><path d="M1.65 1.55 H7.55 L4.60 6.55 Z" fill="none" stroke="#5a5a5a" stroke-width="1.1" stroke-linejoin="round"/></svg>
<div class="t" style="left:1079.20px;top:701.29px;font-size:12.60px;color:#6e6e6e;">Listinná podoba</div>
<svg class="b" style="left:1192px;top:702px;" width="10" height="9" viewBox="0 0 10 9"><path d="M1.65 1.55 H7.55 L4.60 6.55 Z" fill="none" stroke="#5a5a5a" stroke-width="1.1" stroke-linejoin="round"/></svg>
<div class="t" style="left:1219.20px;top:701.29px;font-size:12.60px;color:#6e6e6e;">Označena jako nepodaná</div>
<svg class="b" style="left:1384px;top:702px;" width="10" height="9" viewBox="0 0 10 9"><path d="M1.65 1.55 H7.55 L4.60 6.55 Z" fill="none" stroke="#5a5a5a" stroke-width="1.1" stroke-linejoin="round"/></svg>
<svg class="b" style="left:192px;top:735px;" width="18" height="8" viewBox="0 0 18 8"><rect x="1.65" y="2.55" width="3.3" height="2.9" rx="1.25" fill="none" stroke="#2b79b9" stroke-width="1.25"/><rect x="7.35" y="2.55" width="3.3" height="2.9" rx="1.25" fill="none" stroke="#2b79b9" stroke-width="1.25"/><rect x="13.05" y="2.55" width="3.3" height="2.9" rx="1.25" fill="none" stroke="#2b79b9" stroke-width="1.25"/></svg>
<svg class="b" style="left:218px;top:730px;" width="18" height="18" viewBox="0 0 18 18"><circle cx="9.00" cy="9.10" r="7.5" fill="none" stroke="#2b79b9" stroke-width="1.2"/><circle cx="8.70" cy="5.50" r="0.8" fill="#2b79b9"/><path d="M8.60 7.50 V11.70 Q8.60 12.70 10.20 13.30" fill="none" stroke="#2b79b9" stroke-width="1.2"/></svg>
<div class="t" style="left:255.40px;top:733.61px;font-size:12.70px;color:#222;">001</div>
<div class="t" style="left:335.20px;top:733.61px;font-size:12.70px;color:#222;">Dodavatel - školení 2</div>
<div class="t" style="left:539.20px;top:733.61px;font-size:12.70px;color:#222;">12345678</div>
<div class="t" style="left:639.40px;top:733.61px;font-size:12.70px;color:#222;">27. 5. 2025 13:22</div>
<div class="t" style="left:789.30px;top:733.61px;font-size:12.70px;color:#222;">Otevřena</div>
<svg class="b" style="left:996px;top:733px;" width="10" height="10" viewBox="0 0 10 10"><path d="M2.40 1.80 L8.60 8.00 M8.60 1.80 L2.40 8.00" stroke="#d42a2a" stroke-width="2.1" stroke-linecap="round"/></svg>
<svg class="b" style="left:1136px;top:733px;" width="10" height="10" viewBox="0 0 10 10"><path d="M2.20 1.80 L8.40 8.00 M8.40 1.80 L2.20 8.00" stroke="#d42a2a" stroke-width="2.1" stroke-linecap="round"/></svg>
<svg class="b" style="left:1302px;top:733px;" width="10" height="10" viewBox="0 0 10 10"><path d="M2.20 1.80 L8.40 8.00 M8.40 1.80 L2.20 8.00" stroke="#d42a2a" stroke-width="2.1" stroke-linecap="round"/></svg>
<div class="b" style="left:181px;top:751px;width:1222px;height:1px;background:#e0e0e0"></div>
<svg class="b" style="left:192px;top:760px;" width="18" height="8" viewBox="0 0 18 8"><rect x="1.65" y="2.55" width="3.3" height="2.9" rx="1.25" fill="none" stroke="#2b79b9" stroke-width="1.25"/><rect x="7.35" y="2.55" width="3.3" height="2.9" rx="1.25" fill="none" stroke="#2b79b9" stroke-width="1.25"/><rect x="13.05" y="2.55" width="3.3" height="2.9" rx="1.25" fill="none" stroke="#2b79b9" stroke-width="1.25"/></svg>
<svg class="b" style="left:218px;top:755px;" width="18" height="18" viewBox="0 0 18 18"><circle cx="9.00" cy="9.10" r="7.5" fill="none" stroke="#2b79b9" stroke-width="1.2"/><circle cx="8.70" cy="5.50" r="0.8" fill="#2b79b9"/><path d="M8.60 7.50 V11.70 Q8.60 12.70 10.20 13.30" fill="none" stroke="#2b79b9" stroke-width="1.2"/></svg>
<div class="t" style="left:255.40px;top:758.61px;font-size:12.70px;color:#222;">002</div>
<div class="t" style="left:335.20px;top:758.61px;font-size:12.70px;color:#222;">Dodavatel - školení 3</div>
<div class="t" style="left:539.20px;top:758.61px;font-size:12.70px;color:#222;">12345678</div>
<div class="t" style="left:639.40px;top:758.61px;font-size:12.70px;color:#222;">27. 5. 2025 13:24</div>
<div class="t" style="left:789.30px;top:758.61px;font-size:12.70px;color:#222;">Otevřena</div>
<svg class="b" style="left:996px;top:758px;" width="10" height="10" viewBox="0 0 10 10"><path d="M2.40 1.80 L8.60 8.00 M8.60 1.80 L2.40 8.00" stroke="#d42a2a" stroke-width="2.1" stroke-linecap="round"/></svg>
<svg class="b" style="left:1136px;top:758px;" width="10" height="10" viewBox="0 0 10 10"><path d="M2.20 1.80 L8.40 8.00 M8.40 1.80 L2.20 8.00" stroke="#d42a2a" stroke-width="2.1" stroke-linecap="round"/></svg>
<svg class="b" style="left:1302px;top:758px;" width="10" height="10" viewBox="0 0 10 10"><path d="M2.20 1.80 L8.40 8.00 M8.40 1.80 L2.20 8.00" stroke="#d42a2a" stroke-width="2.1" stroke-linecap="round"/></svg>
<div class="b" style="left:215px;top:751px;width:23px;height:26px;border:1px solid #e0141e;box-sizing:border-box;z-index:5"></div>
<div class="b" style="left:181px;top:776px;width:1222px;height:1px;background:#e0e0e0"></div>
<svg class="b" style="left:192px;top:785px;" width="18" height="8" viewBox="0 0 18 8"><rect x="1.65" y="2.55" width="3.3" height="2.9" rx="1.25" fill="none" stroke="#2b79b9" stroke-width="1.25"/><rect x="7.35" y="2.55" width="3.3" height="2.9" rx="1.25" fill="none" stroke="#2b79b9" stroke-width="1.25"/><rect x="13.05" y="2.55" width="3.3" height="2.9" rx="1.25" fill="none" stroke="#2b79b9" stroke-width="1.25"/></svg>
<svg class="b" style="left:218px;top:780px;" width="18" height="18" viewBox="0 0 18 18"><circle cx="9.00" cy="9.10" r="7.5" fill="none" stroke="#2b79b9" stroke-width="1.2"/><circle cx="8.70" cy="5.50" r="0.8" fill="#2b79b9"/><path d="M8.60 7.50 V11.70 Q8.60 12.70 10.20 13.30" fill="none" stroke="#2b79b9" stroke-width="1.2"/></svg>
<div class="t" style="left:255.40px;top:783.61px;font-size:12.70px;color:#222;">003</div>
<div class="t" style="left:335.20px;top:783.61px;font-size:12.70px;color:#222;">Dodavatel - školení 8</div>
<div class="t" style="left:539.20px;top:783.61px;font-size:12.70px;color:#222;">12345678</div>
<div class="t" style="left:639.40px;top:783.61px;font-size:12.70px;color:#222;">27. 5. 2025 13:25</div>
<div class="t" style="left:789.30px;top:783.61px;font-size:12.70px;color:#222;">Otevřena</div>
<svg class="b" style="left:996px;top:783px;" width="10" height="10" viewBox="0 0 10 10"><path d="M2.40 1.80 L8.60 8.00 M8.60 1.80 L2.40 8.00" stroke="#d42a2a" stroke-width="2.1" stroke-linecap="round"/></svg>
<svg class="b" style="left:1136px;top:783px;" width="10" height="10" viewBox="0 0 10 10"><path d="M2.20 1.80 L8.40 8.00 M8.40 1.80 L2.20 8.00" stroke="#d42a2a" stroke-width="2.1" stroke-linecap="round"/></svg>
<svg class="b" style="left:1302px;top:783px;" width="10" height="10" viewBox="0 0 10 10"><path d="M2.20 1.80 L8.40 8.00 M8.40 1.80 L2.20 8.00" stroke="#d42a2a" stroke-width="2.1" stroke-linecap="round"/></svg>
<div class="b" style="left:181px;top:801px;width:1222px;height:1px;background:#e0e0e0"></div>
<svg class="b" style="left:192px;top:810px;" width="18" height="8" viewBox="0 0 18 8"><rect x="1.65" y="2.55" width="3.3" height="2.9" rx="1.25" fill="none" stroke="#2b79b9" stroke-width="1.25"/><rect x="7.35" y="2.55" width="3.3" height="2.9" rx="1.25" fill="none" stroke="#2b79b9" stroke-width="1.25"/><rect x="13.05" y="2.55" width="3.3" height="2.9" rx="1.25" fill="none" stroke="#2b79b9" stroke-width="1.25"/></svg>
<svg class="b" style="left:218px;top:805px;" width="18" height="18" viewBox="0 0 18 18"><circle cx="9.00" cy="9.10" r="7.5" fill="none" stroke="#2b79b9" stroke-width="1.2"/><circle cx="8.70" cy="5.50" r="0.8" fill="#2b79b9"/><path d="M8.60 7.50 V11.70 Q8.60 12.70 10.20 13.30" fill="none" stroke="#2b79b9" stroke-width="1.2"/></svg>
<div class="t" style="left:255.40px;top:808.61px;font-size:12.70px;color:#222;">004</div>
<div class="t" style="left:335.20px;top:808.61px;font-size:12.70px;color:#222;">Dodavatel - školení 8</div>
<div class="t" style="left:539.20px;top:808.61px;font-size:12.70px;color:#222;">12345678</div>
<div class="t" style="left:639.40px;top:808.61px;font-size:12.70px;color:#222;">27. 5. 2025 13:35</div>
<div class="t" style="left:789.30px;top:808.61px;font-size:12.70px;color:#222;">Otevírání zahájeno</div>
<svg class="b" style="left:996px;top:808px;" width="10" height="10" viewBox="0 0 10 10"><path d="M2.40 1.80 L8.60 8.00 M8.60 1.80 L2.40 8.00" stroke="#d42a2a" stroke-width="2.1" stroke-linecap="round"/></svg>
<svg class="b" style="left:1135px;top:808px;" width="12" height="10" viewBox="0 0 12 10"><path d="M1.70 5.20 L4.90 8.30 L11.10 1.60" fill="none" stroke="#3bb33b" stroke-width="2"/></svg>
<svg class="b" style="left:1302px;top:808px;" width="10" height="10" viewBox="0 0 10 10"><path d="M2.20 1.80 L8.40 8.00 M8.40 1.80 L2.20 8.00" stroke="#d42a2a" stroke-width="2.1" stroke-linecap="round"/></svg>
</body></html>
